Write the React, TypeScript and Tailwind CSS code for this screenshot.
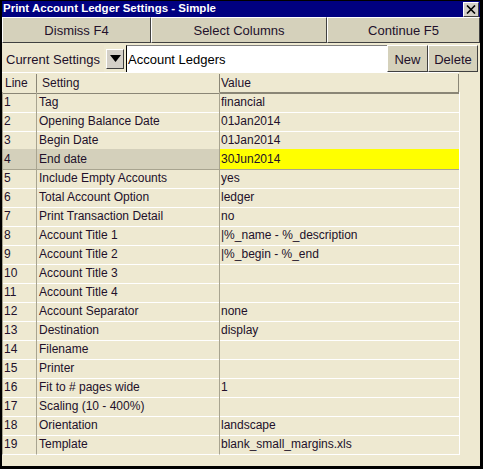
const rows: [string, string, string][] = [
  ["1", "Tag", "financial"],
  ["2", "Opening Balance Date", "01Jan2014"],
  ["3", "Begin Date", "01Jan2014"],
  ["4", "End date", "30Jun2014"],
  ["5", "Include Empty Accounts", "yes"],
  ["6", "Total Account Option", "ledger"],
  ["7", "Print Transaction Detail", "no"],
  ["8", "Account Title 1", "|%_name - %_description"],
  ["9", "Account Title 2", "|%_begin - %_end"],
  ["10", "Account Title 3", ""],
  ["11", "Account Title 4", ""],
  ["12", "Account Separator", "none"],
  ["13", "Destination", "display"],
  ["14", "Filename", ""],
  ["15", "Printer", ""],
  ["16", "Fit to # pages wide", "1"],
  ["17", "Scaling (10 - 400%)", ""],
  ["18", "Orientation", "landscape"],
  ["19", "Template", "blank_small_margins.xls"],
];

const bevel =
  "border border-t-white border-l-white border-r-[#404040] border-b-[#404040] bg-[#d5d1bb] pt-[2px]";

export default function App() {
  return (
    <div
      className="w-[483px] h-[469px] bg-black pt-[1px] pl-[2px] pr-[3px] pb-[3px] text-[#22102a]"
      style={{ fontFamily: '"Liberation Sans", Arial, sans-serif' }}
    >
      <div className="flex h-full flex-col bg-[#eee9d1]">
        {/* title bar */}
        <div className="flex h-[16px] items-center justify-between bg-[#000080] pl-[1px] pr-[1px]">
          <span className="text-[11.5px] font-bold leading-none text-white">
            Print Account Ledger Settings - Simple
          </span>
          <div className="flex h-[15px] w-[16px] items-center justify-center border border-t-white border-l-white border-r-[#404040] border-b-[#404040] bg-[#d4d0c8]">
            <svg width="10" height="9" viewBox="0 0 10 9">
              <path d="M1 0.5 L9 8.5 M9 0.5 L1 8.5" stroke="black" strokeWidth="1.6" />
            </svg>
          </div>
        </div>

        {/* action buttons */}
        <div className="flex h-[26px]">
          <button className={`${bevel} w-[149px] text-[13px]`}>Dismiss F4</button>
          <button className={`${bevel} w-[176px] text-[13px]`}>Select Columns</button>
          <button className={`${bevel} flex-1 text-[13px]`}>Continue F5</button>
        </div>

        {/* current settings row */}
        <div className="flex h-[29px] items-end">
          <div className="flex h-[27px] w-[102px] items-center bg-[#ece6cf] pl-[4px] pt-[2px] text-[13px]">
            Current Settings
          </div>
          <div className="flex h-[27px] w-[22px] items-center justify-center">
            <div className="flex h-[20px] w-[18px] items-center justify-center border border-t-white border-l-white border-r-[#404040] border-b-[#404040] bg-[#d4d0c8]">
              <svg width="11" height="7" viewBox="0 0 11 7">
                <path d="M0 0 H11 L5.5 7 Z" fill="black" />
              </svg>
            </div>
          </div>
          <div className="flex h-[27px] w-[261px] items-center border-l border-t border-l-black border-t-[#808080] bg-white pl-[1px] pt-[2px] text-[13px] text-black">
            Account Ledgers
          </div>
          <button className={`${bevel} h-[27px] w-[41px] text-[13px]`}>New</button>
          <button className={`${bevel} h-[27px] w-[50px] text-[13px]`}>Delete</button>
        </div>

        {/* table */}
        <div className="flex flex-col">
          <div className="grid h-[20px] w-[457px] grid-cols-[35px_183px_239px] border-t border-t-white pt-[1px] text-[12px] leading-[18px]">
            <div className="border-r border-b border-r-[#8a8676] border-b-[#8a8676] pl-[3px]">Line</div>
            <div className="border-r border-b border-r-[#8a8676] border-b-[#8a8676] pl-[5px]">Setting</div>
            <div className="border-r border-b-2 border-r-[#8a8676] border-b-[#8a8676] pl-[1px]">Value</div>
          </div>
          {rows.map(([line, setting, value]) => {
            const selected = line === "4";
            return (
              <div
                key={line}
                className="grid h-[19px] w-[458px] grid-cols-[35px_183px_240px] text-[12px] leading-[19px]"
              >
                <div
                  className={`border-l border-r border-b border-l-[#a8a490] border-r-[#a8a490] ${
                    selected ? "bg-[#d4d0bb] border-b-[#a8a490]" : "border-b-white"
                  } pl-[1px] pt-[1px]`}
                >
                  {line}
                </div>
                <div
                  className={`border-r border-b border-r-[#a8a490] ${
                    selected ? "bg-[#d4d0bb] border-b-[#a8a490]" : "border-b-white"
                  } pl-[2px] pt-[1px]`}
                >
                  {setting}
                </div>
                <div
                  className={`border-r border-b border-r-white ${
                    selected ? "bg-[#ffff00] border-b-[#a8a490] border-r-[#a8a490]" : "border-b-white"
                  } pl-[1px] pt-[1px]`}
                >
                  {value}
                </div>
              </div>
            );
          })}
        </div>
      </div>
    </div>
  );
}
